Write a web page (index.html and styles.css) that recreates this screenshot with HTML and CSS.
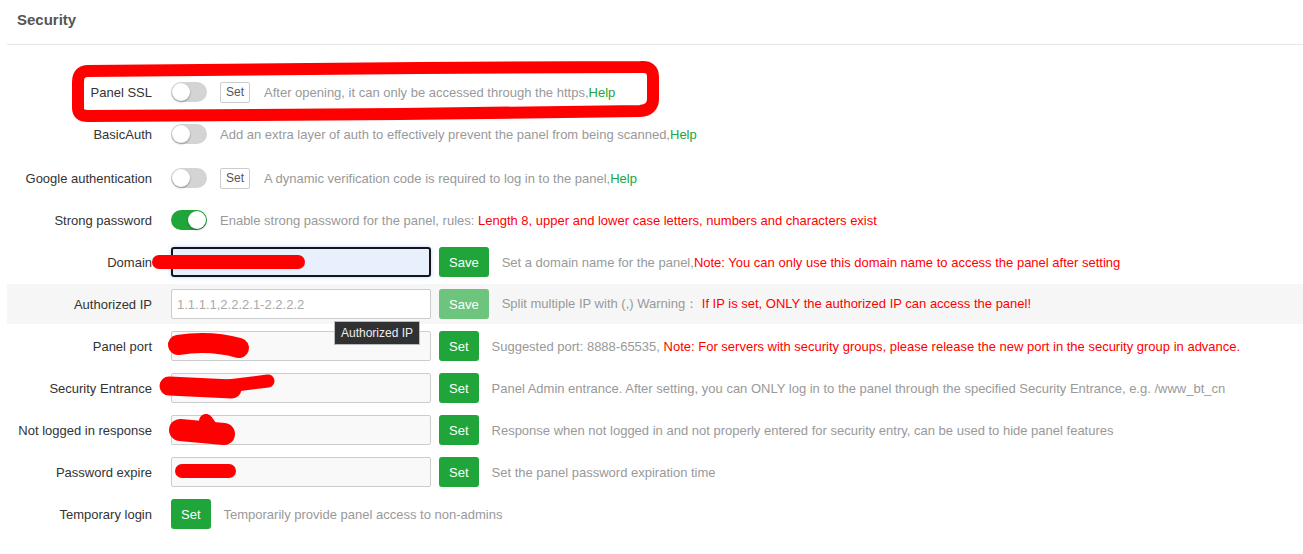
FILE: index.html
```html
<!DOCTYPE html>
<html>
<head>
  <title>Security</title>
  <link rel="stylesheet" href="styles.css">
</head>
<body>
  <div class="panel">
    <div class="panel-head">Security</div>

    <div class="form">
      <div class="row">
        <div class="label">Panel SSL</div>
        <div class="ctrl">
          <span class="switch"></span>
          <button class="btn-sm">Set</button>
          <span class="desc">After opening, it can only be accessed through the https,<a class="help">Help</a></span>
        </div>
      </div>

      <div class="row row-tall">
        <div class="label">BasicAuth</div>
        <div class="ctrl">
          <span class="switch"></span>
          <span class="desc">Add an extra layer of auth to effectively prevent the panel from being scanned,<a class="help">Help</a></span>
        </div>
      </div>

      <div class="row">
        <div class="label">Google authentication</div>
        <div class="ctrl">
          <span class="switch"></span>
          <button class="btn-sm">Set</button>
          <span class="desc">A dynamic verification code is required to log in to the panel,<a class="help">Help</a></span>
        </div>
      </div>

      <div class="row">
        <div class="label">Strong password</div>
        <div class="ctrl">
          <span class="switch on"></span>
          <span class="desc">Enable strong password for the panel, rules: <span class="warn">Length 8, upper and lower case letters, numbers and characters exist</span></span>
        </div>
      </div>

      <div class="row">
        <div class="label">Domain</div>
        <div class="ctrl">
          <input class="inp focused" type="text">
          <button class="btn">Save</button>
          <span class="desc">Set a domain name for the panel,<span class="warn">Note: You can only use this domain name to access the panel after setting</span></span>
        </div>
      </div>

      <div class="row row-grey">
        <div class="label">Authorized IP</div>
        <div class="ctrl">
          <input class="inp white" type="text" placeholder="1.1.1.1,2.2.2.1-2.2.2.2">
          <button class="btn disabled">Save</button>
          <span class="desc">Split multiple IP with (,) Warning：<span class="warn"> If IP is set, ONLY the authorized IP can access the panel!</span></span>
        </div>
        <div class="tooltip">Authorized IP</div>
      </div>

      <div class="row">
        <div class="label">Panel port</div>
        <div class="ctrl">
          <input class="inp" type="text">
          <button class="btn">Set</button>
          <span class="desc">Suggested port: 8888-65535, <span class="warn">Note: For servers with security groups, please release the new port in the security group in advance.</span></span>
        </div>
      </div>

      <div class="row">
        <div class="label">Security Entrance</div>
        <div class="ctrl">
          <input class="inp" type="text">
          <button class="btn">Set</button>
          <span class="desc">Panel Admin entrance. After setting, you can ONLY log in to the panel through the specified Security Entrance, e.g. /www_bt_cn</span>
        </div>
      </div>

      <div class="row">
        <div class="label">Not logged in response</div>
        <div class="ctrl">
          <input class="inp" type="text">
          <button class="btn">Set</button>
          <span class="desc">Response when not logged in and not properly entered for security entry, can be used to hide panel features</span>
        </div>
      </div>

      <div class="row">
        <div class="label">Password expire</div>
        <div class="ctrl">
          <input class="inp" type="text">
          <button class="btn">Set</button>
          <span class="desc">Set the panel password expiration time</span>
        </div>
      </div>

      <div class="row">
        <div class="label">Temporary login</div>
        <div class="ctrl">
          <button class="btn first">Set</button>
          <span class="desc">Temporarily provide panel access to non-admins</span>
        </div>
      </div>
    </div>
  </div>

  <!-- hand drawn marks over the screenshot -->
  <svg class="marks" width="1303" height="554" viewBox="0 0 1303 554">
    <g fill="none" stroke="#ff0000" stroke-linecap="round" stroke-linejoin="round">
      <path d="M88 71 Q78 71 78 82 L78 108 Q78 116 88 116 L400 114 L640 111 Q653 110 653 99 L653 77 Q653 66 641 67 L420 68 Z" stroke-width="12"/>
      <path d="M159 262 L298 262" stroke-width="14"/>
      <path d="M178 345 Q210 340 239 348" stroke-width="20"/>
      <path d="M169 386 L232 389" stroke-width="19"/>
      <path d="M228 386 L268 381" stroke-width="13"/>
      <path d="M180 430 L224 434" stroke-width="22"/>
      <path d="M206 421 L211 428" stroke-width="14"/>
      <path d="M182 471 L229 471" stroke-width="14"/>
    </g>
  </svg>
</body>
</html>
```

FILE: styles.css
```css
body {
  margin: 0;
  font-family: "Liberation Sans", Arial, sans-serif;
  font-size: 13px;
  color: #333;
  background: #fff;
  position: relative;
}
.panel {
  margin-left: 7px;
}
.panel-head {
  height: 44px;
  line-height: 40px;
  padding-left: 10px;
  font-size: 15px;
  font-weight: bold;
  color: #555;
  border-bottom: 1px solid #e6e6e6;
}
.form {
  padding-top: 27px;
}
.row {
  display: flex;
  align-items: center;
  height: 40px;
  margin-bottom: 2px;
  position: relative;
}
.row-tall {
  margin-bottom: 4px;
}
.row-grey {
  background: #f6f6f6;
  z-index: 2;
}
.label {
  width: 145px;
  text-align: right;
  color: #333;
  white-space: nowrap;
}
.ctrl {
  display: flex;
  align-items: center;
  margin-left: 19px;
}
.switch {
  position: relative;
  width: 36px;
  height: 20px;
  border-radius: 10px;
  background: #d4d4d4;
  box-sizing: border-box;
}
.switch:after {
  content: "";
  position: absolute;
  top: 1px;
  left: 1px;
  width: 18px;
  height: 18px;
  border-radius: 50%;
  background: #fff;
  box-shadow: 0 1px 2px rgba(0, 0, 0, 0.35);
}
.switch.on {
  background: #20a53a;
}
.switch.on:after {
  left: 17px;
}
.btn-sm {
  margin-left: 13px;
  height: 21px;
  padding: 0 5px;
  font-family: inherit;
  font-size: 12px;
  color: #555;
  background: #fff;
  border: 1px solid #ccc;
  border-radius: 2px;
}
.desc {
  margin-left: 14px;
  color: #999;
  white-space: nowrap;
}
.switch + .desc {
  margin-left: 13px;
}
.help {
  color: #20a53a;
}
.warn {
  color: #ff0000;
}
.inp {
  width: 260px;
  height: 30px;
  box-sizing: border-box;
  padding: 0 5px;
  font-family: inherit;
  font-size: 13px;
  color: #555;
  background: #f9f9f9;
  border: 1px solid #ccc;
  border-radius: 2px;
  outline: none;
}
.inp::placeholder {
  color: #aaa;
}
.inp.white {
  background: #fff;
}
.inp.focused {
  background: #e8f0fe;
  border: 2px solid #151515;
  border-radius: 3px;
  box-shadow: 0 0 4px rgba(102, 153, 255, 0.45);
}
.btn {
  margin-left: 8px;
  height: 30px;
  padding: 0 10px;
  font-family: inherit;
  font-size: 13px;
  color: #fff;
  background: #20a53a;
  border: none;
  border-radius: 3px;
}
.btn.disabled {
  background: #6cc47d;
}
.btn.first {
  margin-left: 0;
}
.btn + .desc {
  margin-left: 13px;
}
.tooltip {
  position: absolute;
  z-index: 5;
  left: 327px;
  top: 37px;
  height: 24px;
  line-height: 22px;
  box-sizing: border-box;
  padding: 0 6px;
  font-size: 12px;
  color: #eee;
  background: #303133;
  border: 1px solid #bbb;
}
.marks {
  position: absolute;
  z-index: 10;
  left: 0;
  top: 0;
  pointer-events: none;
}
```
